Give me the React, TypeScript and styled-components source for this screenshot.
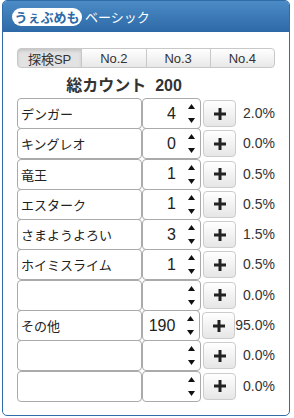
import styled, { createGlobalStyle } from 'styled-components'

const GlobalStyle = createGlobalStyle`
    body {
        margin: 0;
        background: #fff;
        font-family: 'Liberation Sans', 'Noto Sans CJK JP', sans-serif;
        color: #333;
    }
`

const Panel = styled.section`
    width: 288px;
    height: 416px;
    margin-left: 2px;
    box-sizing: border-box;
    border: 1px solid #2f6ca8;
    border-radius: 5px;
    overflow: hidden;
    display: flex;
    flex-direction: column;
`

const Header = styled.header`
    height: 31px;
    display: flex;
    align-items: center;
    padding-left: 9px;
    gap: 3px;
    background: linear-gradient(#4b8bc6, #2d69a6);
    color: #fff;
    font-size: 13px;
`

const Badge = styled.span`
    display: inline-flex;
    align-items: center;
    justify-content: center;
    width: 70px;
    height: 18px;
    border-radius: 9px;
    background: #fff;
    color: #2d69a6;
    font-weight: bold;
    font-size: 13px;
`

const Body = styled.div`
    padding: 16px 14px 0;
    display: flex;
    flex-direction: column;
`

const Tabs = styled.nav`
    display: flex;
    height: 20px;
`

const Tab = styled.button<{ $active?: boolean }>`
    flex: 1;
    height: 20px;
    padding: 0;
    margin-left: -1px;
    border: 1px solid #c8c8c8;
    font-family: inherit;
    font-size: 13px;
    color: #333;
    background: ${(p) => (p.$active ? '#e2e2e2' : 'linear-gradient(#fff, #e8e8e8)')};
    box-shadow: ${(p) => (p.$active ? 'inset 0 2px 3px rgba(0,0,0,0.12)' : 'none')};

    &:first-child {
        margin-left: 0;
        border-radius: 4px 0 0 4px;
    }

    &:last-child {
        border-radius: 0 4px 4px 0;
    }
`

const Total = styled.h2`
    margin: 9px 0 4px;
    padding-right: 44px;
    text-align: center;
    font-size: 16px;
    font-weight: bold;
    color: #333;
    line-height: 17px;

    span {
        margin-left: 9px;
    }
`

const Row = styled.div`
    display: flex;
    align-items: flex-start;
    height: 30.3px;
`

const NameBox = styled.div`
    width: 125px;
    height: 31px;
    box-sizing: border-box;
    border: 1px solid #aaa;
    border-radius: 4px;
    padding-left: 3px;
    display: flex;
    align-items: center;
    font-size: 13px;
    color: #222;
`

const NumBox = styled.div`
    width: 59px;
    height: 31px;
    box-sizing: border-box;
    border: 1px solid #aaa;
    border-radius: 4px;
    display: flex;
    align-items: center;
    justify-content: flex-end;
    padding-right: 5px;
    gap: 12px;
    font-size: 16px;
    color: #222;
`

const Spinner = styled.svg`
    flex: none;
`

const PlusButton = styled.button`
    width: 33px;
    height: 27px;
    margin: 2px 0 0 2px;
    box-sizing: border-box;
    border: 1px solid #ccc;
    border-radius: 4px;
    background: linear-gradient(#fff, #e6e6e6);
    display: flex;
    align-items: center;
    justify-content: center;
    padding: 0;
`

const Percent = styled.span`
    flex: 1;
    text-align: right;
    font-size: 14px;
    line-height: 31px;
    color: #333;
    white-space: nowrap;
`

const rows = [
    { name: 'デンガー', count: '4', pct: '2.0%' },
    { name: 'キングレオ', count: '0', pct: '0.0%' },
    { name: '竜王', count: '1', pct: '0.5%' },
    { name: 'エスターク', count: '1', pct: '0.5%' },
    { name: 'さまようよろい', count: '3', pct: '1.5%' },
    { name: 'ホイミスライム', count: '1', pct: '0.5%' },
    { name: '', count: '', pct: '0.0%' },
    { name: 'その他', count: '190', pct: '95.0%' },
    { name: '', count: '', pct: '0.0%' },
    { name: '', count: '', pct: '0.0%' },
]

const tabs = ['探検SP', 'No.2', 'No.3', 'No.4']

export default function App() {
    return (
        <>
            <GlobalStyle />
            <Panel>
                <Header>
                    <Badge>うぇぶめも</Badge>
                    ベーシック
                </Header>
                <Body>
                    <Tabs>
                        {tabs.map((t, i) => (
                            <Tab key={t} $active={i === 0}>
                                {t}
                            </Tab>
                        ))}
                    </Tabs>
                    <Total>
                        総カウント<span>200</span>
                    </Total>
                    {rows.map((r, i) => (
                        <Row key={i}>
                            <NameBox>{r.name}</NameBox>
                            <NumBox>
                                {r.count}
                                <Spinner width="7" height="19" viewBox="0 0 7 19">
                                    <path d="M3.5 0 L7 5 L0 5 Z" fill="#111" />
                                    <path d="M0 14 L7 14 L3.5 19 Z" fill="#111" />
                                </Spinner>
                            </NumBox>
                            <PlusButton>
                                <svg width="12" height="12" viewBox="0 0 12 12">
                                    <path d="M4.5 0h3v4.5H12v3H7.5V12h-3V7.5H0v-3h4.5z" fill="#222" />
                                </svg>
                            </PlusButton>
                            <Percent>{r.pct}</Percent>
                        </Row>
                    ))}
                </Body>
            </Panel>
        </>
    )
}
